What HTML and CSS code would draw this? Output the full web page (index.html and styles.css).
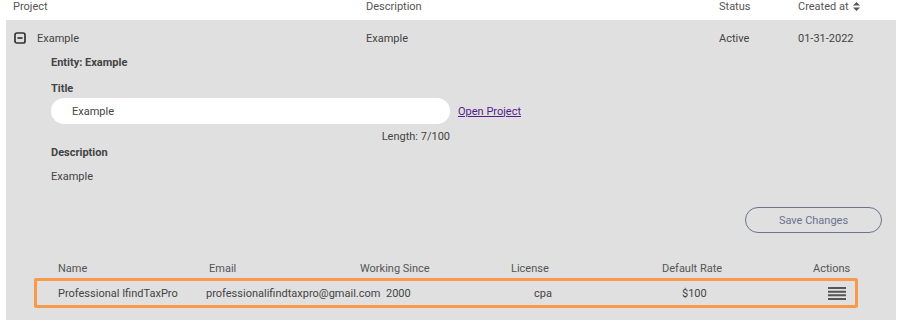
FILE: index.html
```
<!DOCTYPE html>
<html lang="en">
<head>
    <meta charset="UTF-8">
    <meta name="viewport" content="width=device-width, initial-scale=1.0">
    <title>Projects</title>
    <link rel="stylesheet" href="styles.css">
</head>
<body>

    <div class="projects">
        <div class="cols head">
            <span>Project</span>
            <span>Description</span>
            <span>Status</span>
            <span class="sort">Created at
                <svg width="7" height="9" viewBox="0 0 7 9"><path d="M3.5 0L7 3.6H0z M3.5 9L0 5.4H7z" fill="#555"/></svg>
            </span>
        </div>

        <div class="project">
            <div class="cols summary">
                <span class="name">
                    <svg class="toggle" width="12" height="12" viewBox="0 0 12 12">
                        <rect x="1" y="1" width="10" height="10" rx="1.8" fill="none" stroke="#333" stroke-width="1.7"/>
                        <path d="M3.5 6H8.5" stroke="#333" stroke-width="1.7"/>
                    </svg>
                    Example
                </span>
                <span>Example</span>
                <span>Active</span>
                <span>01-31-2022</span>
            </div>

            <div class="details">
                <div class="label entity">Entity: Example</div>
                <div class="label">Title</div>
                <div class="title-row">
                    <input class="title-input" type="text" value="Example">
                    <a href="#" class="open-link">Open Project</a>
                </div>
                <div class="length">Length: 7/100</div>
                <div class="label">Description</div>
                <div class="desc">Example</div>
                <div class="save-row">
                    <button class="save">Save Changes</button>
                </div>
            </div>

            <div class="pros">
                <div class="pros-head">
                    <span>Name</span>
                    <span>Email</span>
                    <span>Working Since</span>
                    <span>License</span>
                    <span>Default Rate</span>
                    <span>Actions</span>
                </div>
                <div class="pro-row">
                    <span>Professional IfindTaxPro</span>
                    <span>professionalifindtaxpro@gmail.com</span>
                    <span>2000</span>
                    <span>cpa</span>
                    <span>$100</span>
                    <span class="menu">
                        <svg width="18" height="13" viewBox="0 0 18 13"><path d="M0 1H18M0 4.7H18M0 8.3H18M0 12H18" stroke="#555" stroke-width="2"/></svg>
                    </span>
                </div>
            </div>
        </div>
    </div>

</body>
</html>
```
FILE: styles.css
```
*{
    margin: 0;
    padding: 0;
    box-sizing: border-box;
}
body{
    font-family: Roboto, "Liberation Sans", Arial, sans-serif;
    font-size: 11px;
    color: #444;
    background: #fff;
}
.projects{
    padding: 0 4px 0 6px;
}
.cols{
    display: grid;
    grid-template-columns: 353px 353px 79px 1fr;
    padding-left: 7px;
}
.head{
    height: 20px;
    line-height: 14px;
    color: #555;
}
.sort svg{
    margin-left: 2px;
    vertical-align: -1px;
}
.project{
    background-color: #e0e0e0;
    padding-bottom: 12px;
}
.summary{
    height: 36px;
    align-items: center;
}
.name{
    display: flex;
    align-items: center;
    gap: 11px;
    margin-left: 1px;
}
.details{
    padding-left: 45px;
}
.label{
    font-weight: bold;
    line-height: 14px;
}
.entity{
    margin-bottom: 12px;
}
.title-row{
    display: flex;
    align-items: center;
    gap: 8px;
    margin-top: 2px;
}
.title-input{
    width: 399px;
    height: 26px;
    border: none;
    border-radius: 13px;
    background: #fff;
    padding-left: 21px;
    font-family: inherit;
    font-size: 11px;
    color: #444;
    outline: none;
}
.open-link{
    color: #551a8b;
}
.length{
    width: 399px;
    text-align: right;
    line-height: 14px;
    margin-top: 6px;
    margin-bottom: 2px;
}
.desc{
    line-height: 14px;
    margin-top: 10px;
}
.save-row{
    display: flex;
    justify-content: flex-end;
    padding-right: 14px;
    margin-top: 23px;
}
.save{
    width: 137px;
    height: 26px;
    border: 1px solid #6b7391;
    border-radius: 13px;
    background: transparent;
    color: #6b7391;
    font-family: inherit;
    font-size: 11px;
}
.pros{
    margin: 29px 0 0 28px;
    width: 824px;
}
.pros-head{
    display: grid;
    grid-template-columns: repeat(5, 151px) auto;
    padding-left: 24px;
    line-height: 14px;
    color: #555;
    margin-bottom: 2px;
}
.pro-row{
    display: grid;
    grid-template-columns: 148px 180px 148px 148px 146px auto;
    align-items: center;
    height: 30px;
    padding-left: 21px;
    border: 3px solid #f79a4c;
    border-radius: 2px;
}
.menu svg{
    display: block;
}
```
